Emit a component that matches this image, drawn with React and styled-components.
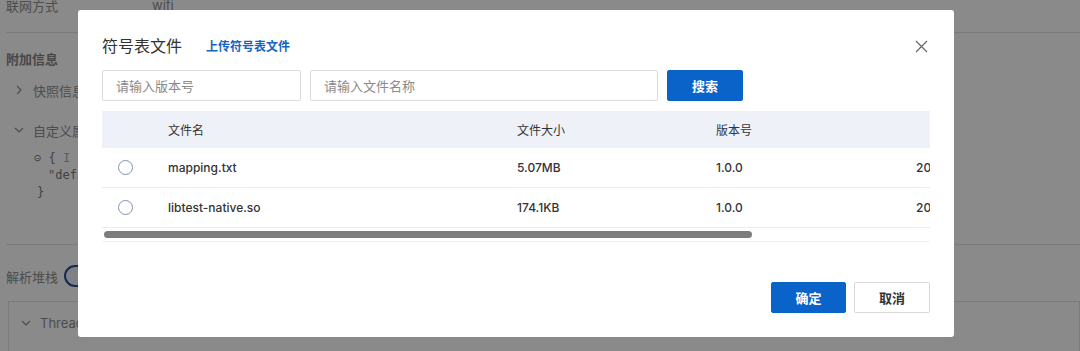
import React from "react";
import styled, { createGlobalStyle } from "styled-components";

const GlobalStyle = createGlobalStyle`
  html, body {
    margin: 0;
    padding: 0;
    width: 1080px;
    height: 351px;
    overflow: hidden;
    background: #fff;
    font-family: Inter, "Noto Sans CJK SC", sans-serif;
  }
`;

const Page = styled.div`
  position: relative;
  width: 1080px;
  height: 351px;
  overflow: hidden;
  background: #fff;
  color: #8e8e8e;
  font-size: 13px;
`;

const PageInner = styled.div`
  display: flex;
  flex-direction: column;
  padding: 0 0 0 6px;
  margin-top: -6px;
`;

const InfoRow = styled.div`
  display: flex;
  align-items: center;
  height: 22px;
  & span:first-child {
    width: 146px;
  }
`;

const Divider = styled.div`
  height: 1px;
  background: #e2e2e2;
  margin: ${(p) => p.$margin || "10px 0 0"};
`;

const SectionTitle = styled.div`
  font-weight: 700;
  color: #858585;
  margin-top: 16px;
  height: 20px;
`;

const Collapse = styled.div`
  display: flex;
  align-items: center;
  gap: 9px;
  padding-left: 8px;
  margin-top: ${(p) => p.$mt || "11px"};
  height: 20px;
`;

const Chevron = ({ down }) => (
  <svg width="10" height="10" viewBox="0 0 10 10" fill="none" stroke="#8e8e8e" strokeWidth="1.2">
    {down ? <path d="M1 3l4 4 4-4" /> : <path d="M3 1l4 4-4 4" />}
  </svg>
);

const Code = styled.div`
  font-family: "DejaVu Sans Mono", monospace;
  font-size: 12px;
  color: #7a7a7a;
  padding-left: 28px;
  margin-top: 10px;
  line-height: 17px;
  & div:nth-child(2) {
    padding-left: 14px;
  }
  & div:nth-child(3) {
    padding-left: 3px;
  }
`;

const Toggle = styled.div`
  display: flex;
  align-items: center;
  gap: 6px;
  margin-top: 19px;
  height: 24px;
  & i {
    width: 40px;
    height: 22px;
    border-radius: 11px;
    background: #eaeff8;
    border: 2px solid #2a4f8f;
    box-sizing: border-box;
  }
`;

const ThreadBox = styled.div`
  margin: 13px 0 0 2px;
  border: 1px solid #e2e2e2;
  height: 60px;
  & ${Collapse} {
    margin-top: 11px;
    padding-left: 12px;
  }
`;

const Overlay = styled.div`
  position: absolute;
  inset: 0;
  background: rgba(0, 0, 0, 0.46);
  display: flex;
  align-items: flex-start;
  padding: 10px 0 0 78px;
`;

const Modal = styled.div`
  width: 876px;
  height: 327px;
  background: #fff;
  border-radius: 3px;
  box-sizing: border-box;
  padding: 23px 24px 0;
  display: flex;
  flex-direction: column;
  color: #333;
`;

const Header = styled.div`
  display: flex;
  align-items: center;
  height: 24px;
`;

const Title = styled.div`
  font-size: 16px;
  color: #333;
  font-family: "Noto Sans CJK SC", sans-serif;
`;

const Link = styled.a`
  margin-left: 24px;
  font-size: 12px;
  font-weight: 700;
  color: #1565c0;
  font-family: "Noto Sans CJK SC", sans-serif;
`;

const Close = styled.div`
  margin-left: auto;
  margin-right: 2px;
  display: flex;
  margin-top: 3px;
`;

const SearchBar = styled.div`
  display: flex;
  gap: 9px;
  margin-top: 13px;
  height: 31px;
`;

const Input = styled.div`
  width: ${(p) => p.$w}px;
  box-sizing: border-box;
  border: 1px solid #dcdcdc;
  border-radius: 2px;
  display: flex;
  align-items: center;
  padding-left: 13px;
  font-size: 13px;
  color: #8a8a8a;
  font-family: "Noto Sans CJK SC", sans-serif;
`;

const Button = styled.div`
  width: ${(p) => p.$w || 75}px;
  height: 31px;
  box-sizing: border-box;
  border-radius: 2px;
  display: flex;
  align-items: center;
  justify-content: center;
  font-size: 13px;
  font-weight: 700;
  font-family: "Noto Sans CJK SC", sans-serif;
  background: ${(p) => (p.$primary ? "#0a63c9" : "#fff")};
  color: ${(p) => (p.$primary ? "#fff" : "#333")};
  border: 1px solid ${(p) => (p.$primary ? "#0a63c9" : "#d9d9d9")};
`;

const TableWrap = styled.div`
  margin-top: 10px;
  width: 828px;
  overflow: hidden;
  border-bottom: 1px solid #f0f0f0;
`;

const Row = styled.div`
  display: grid;
  grid-template-columns: 66px 349px 199px 200px 80px;
  align-items: center;
  height: ${(p) => (p.$head ? 37 : 40)}px;
  background: ${(p) => (p.$head ? "#eef1f7" : "#fff")};
  border-bottom: 1px solid ${(p) => (p.$head ? "#eef1f7" : "#ececec")};
  box-sizing: border-box;
  font-size: 12px;
  color: #333;
  font-weight: ${(p) => (p.$head ? 400 : 500)};
  white-space: nowrap;
  font-family: Inter, "Noto Sans CJK SC", sans-serif;
`;

const Radio = styled.span`
  width: 13px;
  height: 13px;
  border-radius: 50%;
  border: 1px solid #7f93ad;
  justify-self: start;
  margin-left: 16px;
`;

const Scroll = styled.div`
  height: 13px;
  display: flex;
  align-items: center;
  padding-left: 2px;
  & i {
    width: 648px;
    height: 7px;
    border-radius: 4px;
    background: #7d7d7d;
  }
`;

const Footer = styled.div`
  display: flex;
  justify-content: flex-end;
  gap: 8px;
  margin-top: 40px;
  width: 828px;
`;

const files = [
  { name: "mapping.txt", size: "5.07MB", ver: "1.0.0" },
  { name: "libtest-native.so", size: "174.1KB", ver: "1.0.0" },
];

const App = () => (
  <>
    <GlobalStyle />
    <Page>
      <PageInner>
        <InfoRow>
          <span>联网方式</span>
          <span>wifi</span>
        </InfoRow>
        <Divider $margin="16px 0 0" />
        <SectionTitle>附加信息</SectionTitle>
        <Collapse>
          <Chevron />
          <span>快照信息</span>
        </Collapse>
        <Collapse $mt="20px">
          <Chevron down />
          <span>自定义属性</span>
        </Collapse>
        <Code>
          <div>⊝ {"{"} <span style={{ color: "#aaa" }}>I</span></div>
          <div>"default"</div>
          <div>{"}"}</div>
        </Code>
        <Divider $margin="43px 0 0" />
        <Toggle>
          <span>解析堆栈</span>
          <i />
        </Toggle>
        <ThreadBox>
          <Collapse>
            <Chevron down />
            <span>Thread</span>
          </Collapse>
        </ThreadBox>
      </PageInner>
      <Overlay>
        <Modal>
          <Header>
            <Title>符号表文件</Title>
            <Link>上传符号表文件</Link>
            <Close>
              <svg width="13" height="13" viewBox="0 0 13 13" stroke="#666" strokeWidth="1.2">
                <path d="M1 1l11 11M12 1L1 12" />
              </svg>
            </Close>
          </Header>
          <SearchBar>
            <Input $w={199}>请输入版本号</Input>
            <Input $w={348}>请输入文件名称</Input>
            <Button $primary $w={76}>搜索</Button>
          </SearchBar>
          <TableWrap>
            <Row $head>
              <span />
              <span>文件名</span>
              <span>文件大小</span>
              <span>版本号</span>
              <span />
            </Row>
            {files.map((f) => (
              <Row key={f.name}>
                <Radio />
                <span>{f.name}</span>
                <span>{f.size}</span>
                <span>{f.ver}</span>
                <span>2023-01-01</span>
              </Row>
            ))}
            <Scroll>
              <i />
            </Scroll>
          </TableWrap>
          <Footer>
            <Button $primary>确定</Button>
            <Button $w={76}>取消</Button>
          </Footer>
        </Modal>
      </Overlay>
    </Page>
  </>
);

export default App;
